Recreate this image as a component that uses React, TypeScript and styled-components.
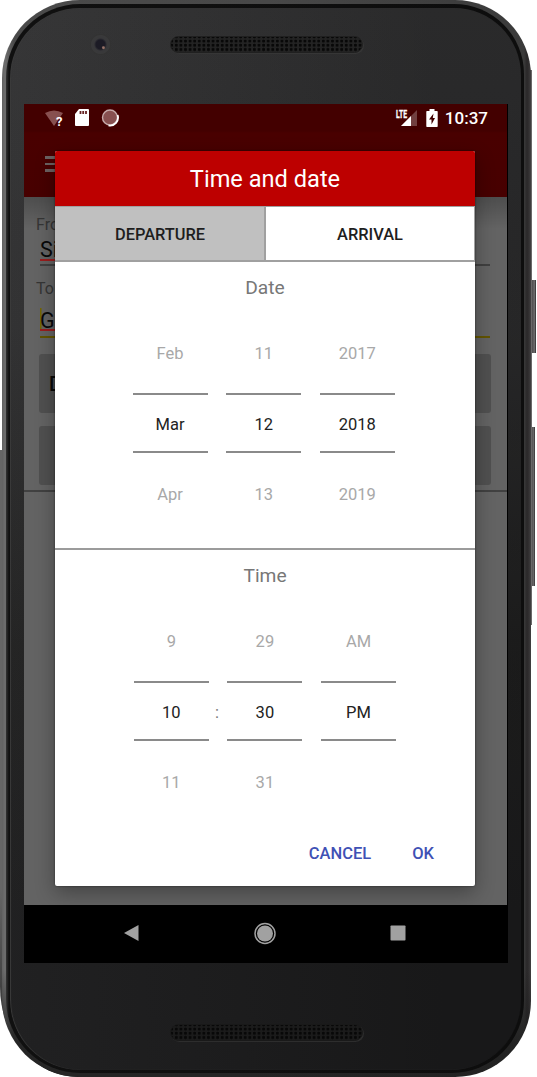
import React from "react";
import styled, { createGlobalStyle } from "styled-components";

const Global = createGlobalStyle`
  *{box-sizing:border-box}
  body{margin:0;background:#fff;font-family:Roboto,"Liberation Sans",sans-serif;overflow:hidden}
`;
const Stage = styled.main`
  position:relative;width:537px;height:1077px;background:#fff;padding-left:2px;overflow:hidden;
`;
const SideKey = styled.i<{ $x: number; $y: number; $w: number; $h: number }>`
  position:absolute;left:${p => p.$x}px;top:${p => p.$y}px;width:${p => p.$w}px;height:${p => p.$h}px;
  background:linear-gradient(90deg,#353334,#5b595a 50%,#6b696a 75%,#2b292a);
`;
const LowerEdge = styled.i`
  position:absolute;left:0;top:450px;width:90px;height:627px;border-radius:0 0 0 78px / 0 0 0 90px;
  background:linear-gradient(#666 70%,#333 92%,#181818);
`;
const Phone = styled.div`
  position:relative;width:529px;height:1077px;padding:4px 7px 4px 4px;
  border-radius:78px 76px 76px 78px;
  background:linear-gradient(transparent 90%,rgba(28,28,28,.8) 97%),linear-gradient(90deg,#626262 0,#6e6e6e 3px,#4a4a4a 12px,#484848 50%,#3a3a3a 522px,#2a2829 525px,#333132 527px,#424041 529px);
`;
const Ring = styled.div`
  height:1069px;padding:4px 3px 3px 4px;border-radius:74px 70px 72px 74px;
  background:linear-gradient(90deg,#333 0,#101010 3px,#0d0d0d);
`;
const Face = styled.div`
  height:1062px;border-radius:70px 67px 70px 70px;display:flex;flex-direction:column;
  padding:96px 13px 0 14px;position:relative;
  background:linear-gradient(90deg,rgba(255,255,255,.01),rgba(0,0,0,.2) 85%),linear-gradient(#343435 0,#303031 30%,#222 60%,#1e1e1f 85%);
  box-shadow:inset 1px 0 1px #3b3b3b;
`;
const Camera = styled.i`
  position:absolute;left:80px;top:26px;width:21px;height:21px;border-radius:50%;
  background:radial-gradient(circle at 64% 65%,#9a7468 0 .8px,transparent 2px),radial-gradient(circle,#1c1b25 0 4.5px,#38383a 6.5px,#39393a 9px,#323232 10px);
`;
const Speaker = styled.i<{ $y: number; $low?: boolean }>`
  position:absolute;left:160px;top:${p => p.$y}px;width:193px;height:17px;border-radius:9px;
  background:radial-gradient(circle,#080808 0 1.2px,transparent 1.8px) 3px 2px/4.6px 4.2px,${p => (p.$low ? "#1b1b1b" : "#232323")};
  border:1px solid ${p => (p.$low ? "#191919" : "#202020")};
  box-shadow:1px 1px 0 ${p => (p.$low ? "#2d2d2d" : "#363636")};
`;
const Screen = styled.section`
  position:relative;width:484px;height:859px;background:#000;display:flex;flex-direction:column;
`;
const AppBar = styled.header`
  height:93px;width:483px;background:linear-gradient(#430000 0,#430000 27px,#490000 29px,#470000);
`;
const Status = styled.div`
  height:27px;display:flex;align-items:center;justify-content:space-between;padding:0 19px 0 20px;
  color:#fff;font-size:17px;font-weight:500;
`;
const StatusSide = styled.div<{ $gap: number }>`
  display:flex;align-items:center;height:27px;gap:${p => p.$gap}px;
`;
const Clock = styled.span`line-height:27px;padding-top:1px;`;
const Burger = styled.div`
  width:22px;height:16px;margin:25px 0 0 21px;border-top:3px solid #6c6262;border-bottom:3px solid #6c6262;
  background:linear-gradient(#6c6262,#6c6262) 0 4px/100% 2px no-repeat;
`;
const Content = styled.div`
  width:483px;height:708px;background:linear-gradient(rgba(0,0,0,.22),transparent 32px),#636363;padding:0 0 0 12px;
  display:flex;flex-direction:column;
`;
const Label = styled.div<{ $top: number }>`
  margin-top:${p => p.$top}px;height:20px;line-height:20px;font-size:16px;color:#353535;
`;
const Field = styled.div<{ $active?: boolean; $top: number }>`
  width:450px;margin:${p => p.$top}px 0 0 4px;height:${p => (p.$active ? 30 : 29)}px;
  font-size:21.5px;line-height:25px;color:#090909;
  border-bottom:${p => (p.$active ? "2px solid #625400" : "2px solid #404040")};
`;
const Typed = styled.span<{ $active?: boolean }>`
  display:inline-block;vertical-align:top;height:${p => (p.$active ? 23 : 24)}px;border-bottom:2px solid #991d1d;
  box-shadow:${p => (p.$active ? "inset 1.5px 0 #756600" : "none")};
`;
const FormButton = styled.div<{ $top: number }>`
  width:452px;height:59px;margin:${p => p.$top}px 0 0 3px;border-radius:3px;background:#505050;
  padding-left:10px;line-height:60px;font-size:20px;font-weight:500;color:#080808;
`;
const Rule = styled.div`height:2px;margin:5px 0 0 -12px;background:#414141;`;
const NavBar = styled.nav`
  height:58px;display:flex;align-items:center;justify-content:space-between;padding:0 102px 2px 99px;
`;
const Dialog = styled.article`
  position:absolute;left:31px;top:47px;width:420px;height:735px;background:#fff;border-radius:2px;
  display:flex;flex-direction:column;box-shadow:0 7px 20px rgba(0,0,0,.32),0 0 2px rgba(0,0,0,.6);overflow:hidden;
`;
const Title = styled.h1`
  margin:0;height:55px;background:#bd0000;color:#fff;text-align:center;font-weight:400;font-size:23.6px;line-height:56px;
`;
const Tabs = styled.div`
  display:grid;grid-template-columns:211px 209px;height:56px;
`;
const Tab = styled.div<{ $selected?: boolean }>`
  height:56px;line-height:55px;text-align:center;font-size:16.4px;font-weight:500;color:#1e1e1e;
  border:solid #a0a0a0;border-width:1px ${p => (p.$selected ? 2 : 1)}px 2px 0;
  padding-left:${p => (p.$selected ? 1 : 0)}px;
  background:${p => (p.$selected ? "#c0c0c0" : "#fff")};
`;
const Section = styled.section<{ $h: number; $ruled?: boolean }>`
  height:${p => p.$h}px;border-bottom:${p => (p.$ruled ? "2px solid #9b9b9b" : "none")};
`;
const SectionTitle = styled.h2`
  margin:0;height:61px;padding-top:12px;text-align:center;font-size:19.2px;line-height:28px;
  font-weight:400;color:#777;
`;
const Pickers = styled.div<{ $left: number }>`
  display:flex;gap:18.6px;padding-left:${p => p.$left}px;position:relative;
`;
const Wheel = styled.div`width:75px;text-align:center;font-size:16.5px;`;
const Ghost = styled.div`height:70px;line-height:61px;color:#a8a8a8;`;
const Chosen = styled.div`
  height:60px;line-height:60px;border:solid #8a8a8a;border-width:2px 0;color:#222;
`;
const After = styled(Ghost)`line-height:84px;`;
const Colon = styled.span`
  position:absolute;left:160px;top:91px;font-size:16.5px;line-height:22px;color:#777;
`;
const Actions = styled.footer`
  display:flex;justify-content:flex-end;gap:41px;padding:0 41px 0 0;height:62px;line-height:60px;
  font-size:16.5px;font-weight:500;color:#3f51b5;
`;

const WifiIcon = () => (
  <svg width="20" height="20" viewBox="0 0 20 20">
    <path d="M1 5Q10 0 19 5L10 18Z" fill="#875050" />
    <text x="12" y="18" fontSize="13" fontWeight="700" fill="#fff">?</text>
  </svg>
);
const CardIcon = () => (
  <svg width="16" height="20" viewBox="0 0 16 20">
    <path d="M5 1h9q1 0 1 1v15q0 1-1 1H2q-1 0-1-1V6Z" fill="#fff" />
    <path d="M6.500 3v3M9.200 3v3M12 3v3" stroke="#622" strokeWidth="1.8" />
  </svg>
);
const SyncIcon = () => (
  <svg width="20" height="20" viewBox="0 0 20 20">
    <circle cx="10" cy="9.500" r="7.500" fill="#875050" stroke="#c5aaaa" strokeWidth="1.400" />
    <path d="M17.600 7A8 8 0 0 1 8.500 17.400" fill="none" stroke="#fff" strokeWidth="1.800" />
  </svg>
);
const SignalIcon = () => (
  <svg width="24" height="22" viewBox="0 0 24 22">
    <path d="M6 19L22 3V19Z" fill="#714040" />
    <path d="M6 19L16 9V19Z" fill="#fff" />
    <text x="1" y="10.500" fontSize="10.500" fontWeight="700" fill="#fff" stroke="#fff" strokeWidth=".3" textLength="11" lengthAdjust="spacingAndGlyphs">LTE</text>
  </svg>
);
const BatteryIcon = () => (
  <svg width="12" height="20" viewBox="0 0 12 20">
    <path d="M3.500 1h5v2H11q.7 0 .7.7v14.600q0 .7-.7.7H1q-.7 0-.7-.7V3.700Q.3 3 1 3h2.500Z" fill="#fff" />
    <path d="M7.500 5.500L3 11.500h2.500V16.500L9 10H6.800Z" fill="#410000" />
  </svg>
);

function Column({ values }: { values: string[] }) {
  return (
    <Wheel>
      <Ghost>{values[0]}</Ghost>
      <Chosen>{values[1]}</Chosen>
      <After>{values[2]}</After>
    </Wheel>
  );
}

export default function App() {
  return (
    <>
      <Global />
      <Stage>
        <LowerEdge />
        <SideKey $x={530} $y={280} $w={6} $h={73} />
        <SideKey $x={530} $y={427} $w={5} $h={159} />
        <SideKey $x={530} $y={70} $w={2} $h={555} />
        <Phone>
          <Ring>
            <Face>
              <Camera />
              <Speaker $y={28} />
              <Screen>
                <AppBar>
                  <Status>
                    <StatusSide $gap={10}>
                      <WifiIcon />
                      <CardIcon />
                      <SyncIcon />
                    </StatusSide>
                    <StatusSide $gap={7}>
                      <SignalIcon />
                      <BatteryIcon />
                      <Clock>10:37</Clock>
                    </StatusSide>
                  </Status>
                  <Burger />
                </AppBar>
                <Content>
                  <Label $top={18}>From</Label>
                  <Field $top={2}><Typed>Si</Typed></Field>
                  <Label $top={13}>To</Label>
                  <Field $active $top={9}><Typed $active>G</Typed></Field>
                  <FormButton $top={16}>D</FormButton>
                  <FormButton $top={13} />
                  <Rule />
                </Content>
                <NavBar>
                  <svg width="16" height="18" viewBox="0 0 16 18"><path d="M1 9L15.500 1V17Z" fill="#a1a1a1" /></svg>
                  <svg width="23" height="23" viewBox="0 0 23 23">
                    <circle cx="12" cy="11.500" r="10" fill="none" stroke="#a1a1a1" strokeWidth="1.500" />
                    <circle cx="12" cy="11.500" r="8" fill="#a1a1a1" />
                  </svg>
                  <svg width="16" height="16" viewBox="0 0 16 16"><rect x=".5" y=".5" width="15" height="15" rx=".8" fill="#a1a1a1" /></svg>
                </NavBar>
                <Dialog>
                  <Title>Time and date</Title>
                  <Tabs><Tab $selected>DEPARTURE</Tab><Tab>ARRIVAL</Tab></Tabs>
                  <Section $h={288} $ruled>
                    <SectionTitle>Date</SectionTitle>
                    <Pickers $left={77.6}>
                      <Column values={["Feb", "Mar", "Apr"]} />
                      <Column values={["11", "12", "13"]} />
                      <Column values={["2017", "2018", "2019"]} />
                    </Pickers>
                  </Section>
                  <Section $h={274}>
                    <SectionTitle>Time</SectionTitle>
                    <Pickers $left={78.8}>
                      <Column values={["9", "10", "11"]} />
                      <Colon>:</Colon>
                      <Column values={["29", "30", "31"]} />
                      <Column values={["AM", "PM", ""]} />
                    </Pickers>
                  </Section>
                  <Actions><span>CANCEL</span><span>OK</span></Actions>
                </Dialog>
              </Screen>
              <Speaker $y={1016} $low />
            </Face>
          </Ring>
        </Phone>
      </Stage>
    </>
  );
}
